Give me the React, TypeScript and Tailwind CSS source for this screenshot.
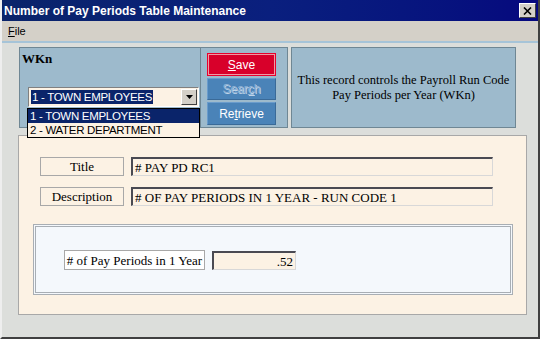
import React from 'react';

const sans = { fontFamily: '"Liberation Sans", Arial, sans-serif' };
const serif = { fontFamily: '"Liberation Serif", "Times New Roman", serif' };

function FieldBox({ value, width, align = 'left' }: { value: string; width: string; align?: 'left' | 'right' }) {
  return (
    <div
      className={`${width} h-[19px] bg-[#fcf2e4] border-t-2 border-l-2 border-t-[#4a4a52] border-l-[#4a4a52] border-b border-r border-b-[#d8d8d8] border-r-[#d8d8d8] flex items-center px-[2px] text-[13px] text-black leading-none ${align === 'right' ? 'justify-end' : ''}`}
      style={serif}
    >
      {value}
    </div>
  );
}

function Label({ text, width }: { text: string; width: string }) {
  return (
    <div
      className={`${width} h-[19px] border border-[#a8a8a8] flex items-center justify-center text-[13px] text-black leading-none`}
      style={serif}
    >
      {text}
    </div>
  );
}

export default function App() {
  return (
    <div className="w-[540px] h-[339px] overflow-hidden flex flex-col bg-[#dcdedb] border-l-2 border-l-[#eeeeee] border-r-2 border-r-[#404040] border-b-2 border-b-[#404040] relative" style={sans}>
      {/* Title bar */}
      <div className="h-[21px] shrink-0 -ml-[2px] -mr-[2px] bg-gradient-to-r from-[#0a246a] via-[#0a1f7e] to-[#06087e] flex items-center justify-between pl-[4px] pr-[4px]">
        <span className="text-white font-bold text-[12px]">Number of Pay Periods Table Maintenance</span>
        <div className="w-[17px] h-[15px] bg-[#d4d0c8] border border-t-white border-l-white border-b-[#404040] border-r-[#404040] flex items-center justify-center">
          <svg width="9" height="8" viewBox="0 0 9 8">
            <path d="M1 0.5 L8 7.5 M8 0.5 L1 7.5" stroke="#000" strokeWidth="1.6" />
          </svg>
        </div>
      </div>

      {/* Menu bar */}
      <div className="h-[20px] shrink-0 bg-[#d4d0c8] flex items-center pl-[6px] text-[11px] text-black">
        <span><span className="underline">F</span>ile</span>
      </div>
      <div className="h-[2px] shrink-0 bg-[#a6c4d8]" />

      {/* Body */}
      <div className="flex-1 pl-[17px] pt-[4px]">
        <div className="flex items-start">
          {/* WKn panel */}
          <div className="w-[182px] h-[81px] bg-[#9dbacc] border border-[#6f8794] relative">
            <div className="pl-[2px] pt-[4px] text-[13px] font-bold text-black leading-none" style={serif}>WKn</div>
            <div className="absolute left-[8px] top-[39px] w-[171px] h-[20px] bg-[#fcf2e4] border-t border-l border-t-[#808080] border-l-[#808080] border-b border-r border-b-white border-r-white flex items-center pl-[2px]">
              <span className="bg-[#0a246a] text-white text-[11.5px] leading-[14px] px-[1px] tracking-[-0.3px]">1 - TOWN EMPLOYEES</span>
              <div className="ml-auto mr-[1px] w-[16px] h-[16px] bg-[#d4d0c8] border border-t-white border-l-white border-b-[#404040] border-r-[#404040] flex items-center justify-center">
                <svg width="7" height="4" viewBox="0 0 7 4">
                  <path d="M0 0 H7 L3.5 4 Z" fill="#000" />
                </svg>
              </div>
            </div>
            <div className="absolute left-[7px] top-[60px] w-[173px] border border-black bg-[#fcf2e4] z-10 text-[11.5px] tracking-[-0.3px]">
              <div className="h-[14px] bg-[#0a246a] text-white leading-[14px] pl-[2px]">1 - TOWN EMPLOYEES</div>
              <div className="h-[14px] text-black leading-[14px] pl-[2px]">2 - WATER DEPARTMENT</div>
            </div>
          </div>

          {/* Buttons panel */}
          <div className="w-[87px] h-[81px] bg-[#9dbacc] border border-l-0 border-[#6f8794] flex flex-col gap-[2px] pl-[6px] pt-[5px]">
            <div className="w-[69px] h-[23px] bg-[#d8002a] border border-[#e8002c] flex">
              <div className="flex-1 border border-[#ee9aa4] flex items-center justify-center text-white text-[12px]">
                <span><span className="underline">S</span>ave</span>
              </div>
            </div>
            <div className="w-[69px] h-[22px] bg-[#4a83b8] border border-t-[#6a9ccc] border-l-[#6a9ccc] border-b-[#3a6a98] border-r-[#3a6a98] flex items-center justify-center text-[#8fb3d6] text-[12px]" style={{ textShadow: '1px 1px 0 #c0d4e8' }}>
              <span>Sear<span className="underline">c</span>h</span>
            </div>
            <div className="w-[69px] h-[23px] bg-[#4a83b8] border border-t-[#6a9ccc] border-l-[#6a9ccc] border-b-[#3a6a98] border-r-[#3a6a98] flex items-center justify-center text-white text-[12px]">
              <span>Re<span className="underline">t</span>rieve</span>
            </div>
          </div>

          {/* Info panel */}
          <div className="ml-[3px] w-[225px] h-[81px] bg-[#9dbacc] border border-[#6f8794] flex items-center justify-center text-center text-[12.5px] leading-[15px] text-black" style={serif}>
            <div>
              This record controls the Payroll Run Code
              <br />
              Pay Periods per Year (WKn)
            </div>
          </div>
        </div>

        {/* Main cream panel */}
        <div className="mt-[7px] -ml-[1px] w-[509px] h-[180px] bg-[#fcf2e4] border border-[#a8a8a8] pl-[21px] pt-[21px]">
          <div className="flex flex-col gap-[11px]">
            <div className="flex gap-[7px]">
              <Label text="Title" width="w-[84px]" />
              <FieldBox value="# PAY PD RC1" width="w-[362px]" />
            </div>
            <div className="flex gap-[7px]">
              <Label text="Description" width="w-[84px]" />
              <FieldBox value="# OF PAY PERIODS IN 1 YEAR - RUN CODE 1" width="w-[362px]" />
            </div>
          </div>

          <div className="mt-[18px] -ml-[7px] w-[480px] h-[71px] bg-[#f4f8fc] border-[3px] border-double border-[#a8aeb4] pl-[28px] pt-[23px]">
            <div className="flex items-start gap-[7px]">
              <div className="w-[141px] h-[20px] border border-[#a8a8a8] bg-white flex items-center justify-center text-[13px] leading-none text-black" style={serif}>
                # of Pay Periods in 1 Year
              </div>
              <div className="mt-[1px]">
                <FieldBox value=".52" width="w-[84px]" align="right" />
              </div>
            </div>
          </div>
        </div>
      </div>
    </div>
  );
}
